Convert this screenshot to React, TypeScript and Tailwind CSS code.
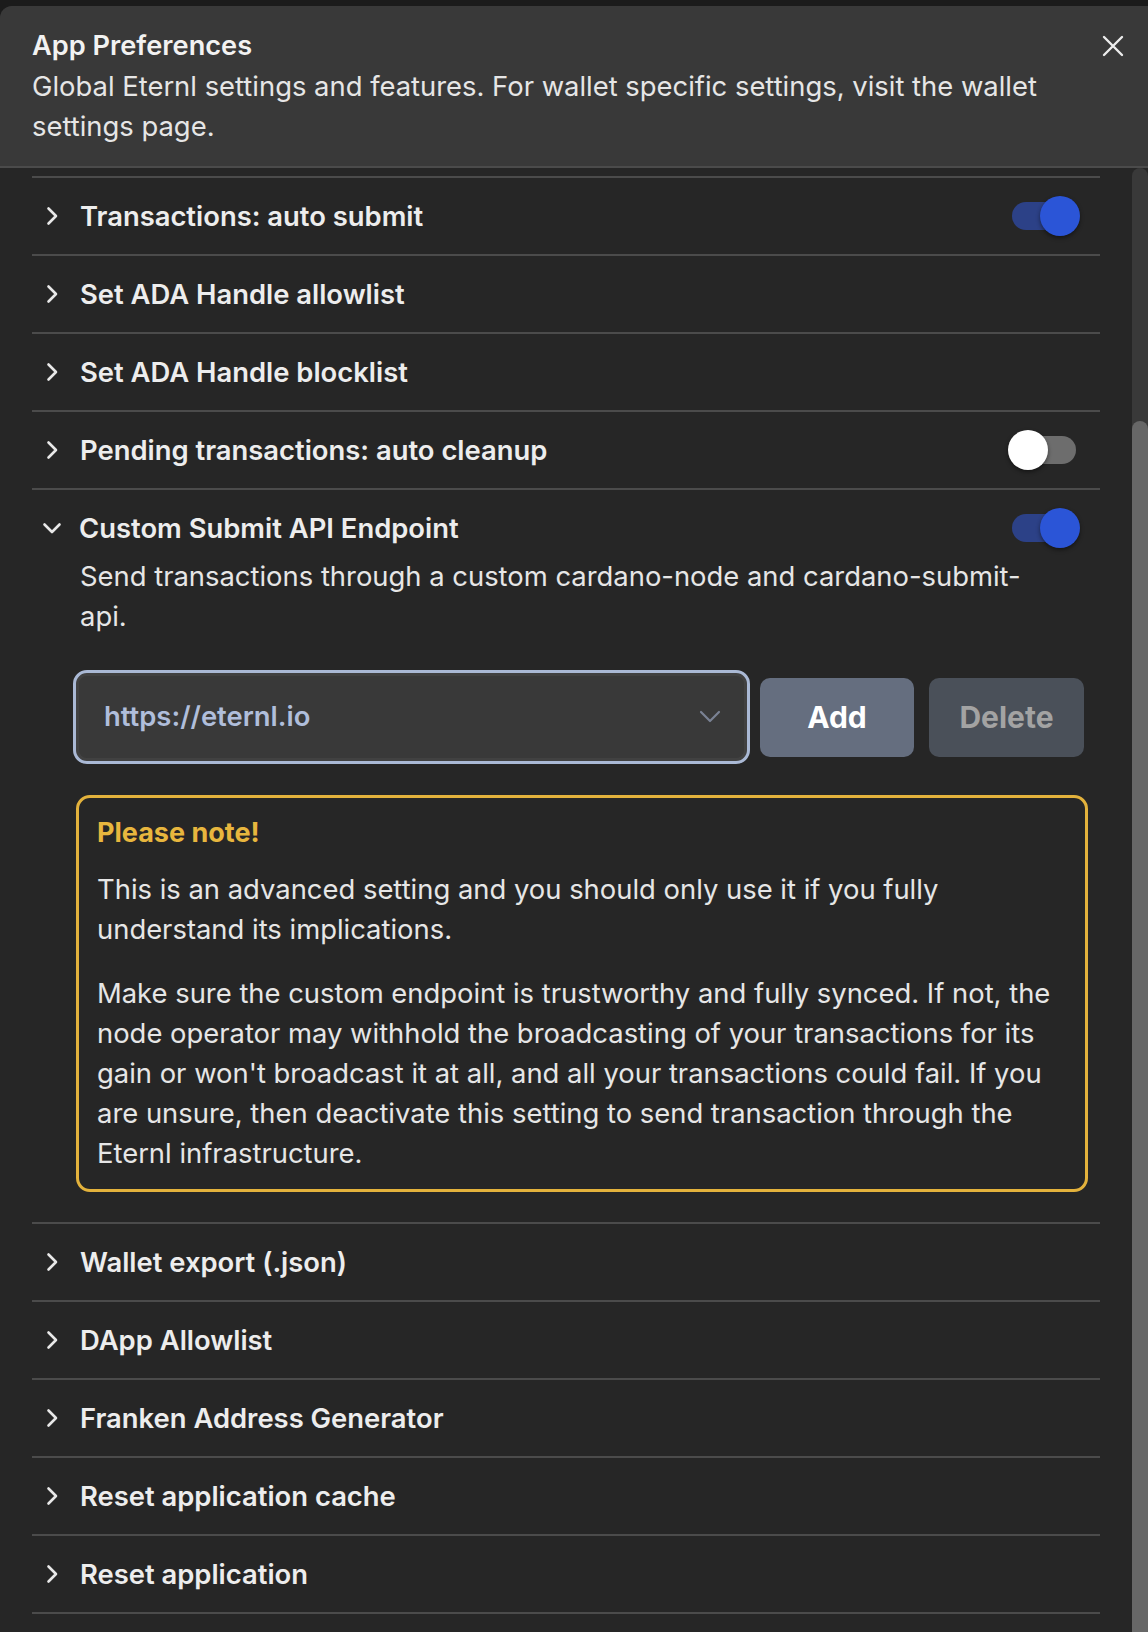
import React from "react";

const ChevronRight = () => (
  <svg width="13" height="20" viewBox="0 0 13 20" fill="none">
    <path d="M2.5 2.5l7.5 7.5-7.5 7.5" stroke="#e8e8e8" strokeWidth="2.6" strokeLinecap="round" strokeLinejoin="round" />
  </svg>
);

const ChevronDown = () => (
  <svg width="20" height="13" viewBox="0 0 20 13" fill="none">
    <path d="M2.5 2.5l7.5 7.5 7.5-7.5" stroke="#e8e8e8" strokeWidth="2.6" strokeLinecap="round" strokeLinejoin="round" />
  </svg>
);

const Toggle = ({ on }: { on: boolean }) => (
  <div className="relative w-[72px] h-[40px] flex items-center px-[4px]">
    <div className={on ? "w-[64px] h-[28px] rounded-full bg-[#2c4187]" : "w-[64px] h-[28px] rounded-full bg-[#6d6d6d]"} />
    {on ? (
      <div className="absolute right-0 top-0 w-[40px] h-[40px] rounded-full bg-[#2b55d7] shadow-[0_2px_4px_rgba(0,0,0,0.45)]" />
    ) : (
      <div className="absolute left-0 top-0 w-[40px] h-[40px] rounded-full bg-white shadow-[0_2px_4px_rgba(0,0,0,0.45)]" />
    )}
  </div>
);

const Row = ({ title, toggle }: { title: string; toggle?: boolean }) => (
  <div className="border-t-2 border-[#4b4b4b] h-[78px] flex items-center pl-[14px] pr-[20px]">
    <ChevronRight />
    <div className="ml-[21px] flex-1 text-[27.4px] leading-[40px] font-semibold text-[#ededed]">{title}</div>
    {toggle !== undefined && <Toggle on={toggle} />}
  </div>
);

export default function App() {
  return (
    <div className="w-[1148px] h-[1632px] bg-[#1b1b1b] pt-[6px] overflow-hidden" style={{ fontFamily: "Inter, 'Noto Sans', sans-serif" }}>
      <div className="h-[1626px] rounded-tl-[12px] bg-[#262626] flex flex-col overflow-hidden">
        {/* Header */}
        <div className="bg-[#393939] border-b-2 border-[#4b4b4b] h-[162px] pt-[20px] pl-[32px] pr-[24px] flex items-start">
          <div className="flex-1 pr-[40px]">
            <div className="text-[27.2px] leading-[40px] font-semibold text-[#f2f2f2]">App Preferences</div>
            <div className="text-[27.4px] leading-[40px] text-[#e6e6e6]">
              Global Eternl settings and features. For wallet specific settings, visit the wallet settings page.
            </div>
          </div>
          <div className="h-[40px] flex items-center">
            <svg width="22" height="22" viewBox="0 0 22 22" fill="none">
              <path d="M2 2l18 18M20 2L2 20" stroke="#ececec" strokeWidth="2.4" strokeLinecap="round" />
            </svg>
          </div>
        </div>

        {/* Body */}
        <div className="flex-1 flex flex-row">
          <div className="w-[1132px] pl-[32px] pr-[32px] pt-[8px]">
            <Row title="Transactions: auto submit" toggle={true} />
            <Row title="Set ADA Handle allowlist" />
            <Row title="Set ADA Handle blocklist" />
            <Row title="Pending transactions: auto cleanup" toggle={false} />

            {/* Expanded */}
            <div className="border-t-2 border-[#4b4b4b] pt-[18px] pb-[30px]">
              <div className="h-[40px] flex items-center pl-[10px] pr-[20px]">
                <ChevronDown />
                <div className="ml-[17px] flex-1 text-[27.4px] leading-[40px] font-semibold text-[#ededed]">Custom Submit API Endpoint</div>
                <Toggle on={true} />
              </div>
              <div className="mt-[8px] pl-[48px] pr-[50px] text-[27.4px] leading-[40px] text-[#e6e6e6]">
                Send transactions through a custom cardano-node and cardano-submit-api.
              </div>
              <div className="mt-[34px] pl-[41px] flex items-center">
                <div className="w-[677px] h-[94px] rounded-[14px] border-[3px] border-[#aab9d5] bg-[#393939] shadow-[inset_0_0_0_3px_#414141] flex items-center pl-[28px] pr-[26px]">
                  <div className="flex-1 text-[27.4px] font-semibold text-[#b0bedb]">https://eternl.io</div>
                  <svg width="22" height="14" viewBox="0 0 22 14" fill="none">
                    <path d="M2 2l9 9 9-9" stroke="#7a8294" strokeWidth="2.2" strokeLinecap="round" strokeLinejoin="round" />
                  </svg>
                </div>
                <div className="ml-[10px] w-[154px] h-[79px] rounded-[10px] bg-[#656e7f] flex items-center justify-center text-[30px] font-bold text-white">
                  Add
                </div>
                <div className="ml-[15px] w-[155px] h-[79px] rounded-[10px] bg-[#4a5059] flex items-center justify-center text-[30px] font-bold text-[#a3a3a3]">
                  Delete
                </div>
              </div>
              <div className="mt-[31px] ml-[44px] w-[1012px] rounded-[14px] border-[3px] border-[#e3b23c] pt-[15px] pb-[16px] pl-[18px] pr-[18px]">
                <div className="text-[27px] leading-[40px] font-bold text-[#e8b63e]">Please note!</div>
                <div className="mt-[16px] text-[27.4px] leading-[40px] text-[#e6e6e6]">
                  This is an advanced setting and you should only use it if you fully understand its implications.
                </div>
                <div className="mt-[24px] text-[27.4px] leading-[40px] text-[#e6e6e6]">
                  Make sure the custom endpoint is trustworthy and fully synced. If not, the node operator may withhold the broadcasting of your transactions for its gain or won't broadcast it at all, and all your transactions could fail. If you are unsure, then deactivate this setting to send transaction through the Eternl infrastructure.
                </div>
              </div>
            </div>

            <Row title="Wallet export (.json)" />
            <Row title="DApp Allowlist" />
            <Row title="Franken Address Generator" />
            <Row title="Reset application cache" />
            <div className="border-b-2 border-[#4b4b4b]">
              <Row title="Reset application" />
            </div>
          </div>
          <div className="w-[16px] flex flex-col">
            <div className="flex-1 rounded-t-[8px] bg-[#393939] flex flex-col">
              <div className="h-[253px]" />
              <div className="flex-1 rounded-t-[8px] bg-[#676767]" />
            </div>
          </div>
        </div>
      </div>
    </div>
  );
}
